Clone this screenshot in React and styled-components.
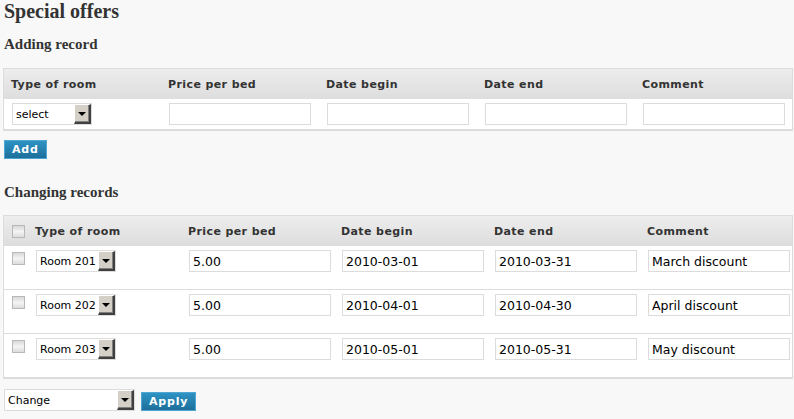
import styled, { createGlobalStyle } from "styled-components";

const GlobalStyle = createGlobalStyle`
  body {
    margin: 0;
    background: #f8f8f8;
    font-family: "DejaVu Sans", Verdana, sans-serif;
    color: #000;
  }
`;

const Page = styled.div`
  padding: 0 1px 8px 3px;
  width: 790px;
`;

const Title = styled.h1`
  font-family: "Liberation Serif", "Times New Roman", serif;
  font-size: 20px;
  font-weight: bold;
  color: #333;
  margin: 0 0 0 1px;
  line-height: 22px;
`;

const Section = styled.h2`
  font-family: "Liberation Serif", "Times New Roman", serif;
  font-size: 15px;
  font-weight: bold;
  color: #333;
  margin: ${(p) => p.$top}px 0 0 1px;
  line-height: 18px;
`;

const Table = styled.div`
  margin-top: ${(p) => p.$top}px;
  border: 1px solid #dcdcdc;
  border-bottom-width: 2px;
  background: #fff;
`;

const Row = styled.div`
  display: grid;
  grid-template-columns: ${(p) => p.$cols};
  align-items: ${(p) => (p.$head ? "center" : "start")};
  height: ${(p) => p.$h}px;
  box-sizing: border-box;
  background: ${(p) =>
    p.$head ? "linear-gradient(#ededed, #dddddd)" : "#fff"};
  border-top: ${(p) => (p.$divider ? "1px solid #dcdcdc" : "none")};
  padding-top: ${(p) => p.$pt || 0}px;
`;

const Cell = styled.div`
  padding-left: ${(p) => p.$pl ?? 7}px;
  padding-top: ${(p) => p.$ptop || 0}px;
  display: flex;
  align-items: center;
`;

const Head = styled.span`
  font-size: 11px;
  font-weight: bold;
  color: #333;
  letter-spacing: 0.4px;
  white-space: nowrap;
`;

const Input = styled.input`
  box-sizing: border-box;
  width: 142px;
  height: 22px;
  border: 1px solid #dcdcdc;
  background: #fff;
  font-family: "DejaVu Sans", Verdana, sans-serif;
  font-size: 12.5px;
  padding: 0 0 0 3px;
  margin: 0 0 0 1px;
  color: #000;
  outline: none;
`;

const SelectBox = styled.div`
  box-sizing: border-box;
  width: ${(p) => p.$w}px;
  height: 22px;
  border: 1px solid #dcdcdc;
  background: #fff;
  display: flex;
  align-items: center;
  justify-content: space-between;
  padding: 0 0 0 3px;
  font-size: 11px;
  color: #000;
  margin-left: 1px;
  white-space: nowrap;
`;

const Arrow = styled.span`
  box-sizing: border-box;
  flex: none;
  width: 17px;
  height: 20px;
  background: #d4d0c8;
  border-top: 1px solid #fff;
  border-left: 1px solid #fff;
  border-right: 2px solid #404040;
  border-bottom: 2px solid #404040;
  box-shadow: inset -1px -1px 0 #808080;
  display: flex;
  align-items: center;
  justify-content: center;
  &::after {
    content: "";
    border-left: 4px solid transparent;
    border-right: 4px solid transparent;
    border-top: 4px solid #000;
  }
`;

const Check = styled.span`
  display: block;
  box-sizing: border-box;
  width: 13px;
  height: 13px;
  border: 1px solid #b8b8b8;
  background: linear-gradient(#d8d8d8, #f4f4f4 50%, #dcdcdc);
`;

const Button = styled.button`
  height: 19px;
  padding: 0 ${(p) => p.$px}px;
  border: 1px solid #4fa7d1;
  background: linear-gradient(#2e93c4, #1d6f9b);
  color: #fff;
  font-family: "DejaVu Sans", Verdana, sans-serif;
  font-size: 11px;
  font-weight: bold;
  letter-spacing: 0.8px;
  line-height: 16px;
  cursor: pointer;
`;

const Footer = styled.div`
  display: flex;
  align-items: flex-start;
  gap: 6px;
  margin-top: 10px;
`;

const AddWrap = styled.div`
  margin-top: 9px;
  margin-left: 1px;
  display: flex;
`;

const Select = ({ value, w }) => (
  <SelectBox $w={w}>
    <span>{value}</span>
    <Arrow />
  </SelectBox>
);

const addCols = "157px 158px 158px 158px 1fr";
const editCols = "24px 153px 153px 153px 153px 1fr";

const records = [
  { room: "Room 201", price: "5.00", begin: "2010-03-01", end: "2010-03-31", comment: "March discount" },
  { room: "Room 202", price: "5.00", begin: "2010-04-01", end: "2010-04-30", comment: "April discount" },
  { room: "Room 203", price: "5.00", begin: "2010-05-01", end: "2010-05-31", comment: "May discount" },
];

const headers = ["Type of room", "Price per bed", "Date begin", "Date end", "Comment"];

const App = () => {
  return (
    <Page>
      <GlobalStyle />
      <Title>Special offers</Title>
      <Section $top={13}>Adding record</Section>

      <Table $top={15}>
        <Row $head $cols={addCols} $h={30}>
          {headers.map((h) => (
            <Cell key={h}>
              <Head>{h}</Head>
            </Cell>
          ))}
        </Row>
        <Row $cols={addCols} $h={30} $pt={4}>
          <Cell>
            <Select value="select" w={80} />
          </Cell>
          <Cell><Input /></Cell>
          <Cell><Input /></Cell>
          <Cell><Input /></Cell>
          <Cell><Input /></Cell>
        </Row>
      </Table>

      <AddWrap>
        <Button $px={7}>Add</Button>
      </AddWrap>

      <Section $top={24}>Changing records</Section>

      <Table $top={14}>
        <Row $head $cols={editCols} $h={30}>
          <Cell $pl={8}><Check /></Cell>
          {headers.map((h) => (
            <Cell key={h}>
              <Head>{h}</Head>
            </Cell>
          ))}
        </Row>
        {records.map((r, i) => (
          <Row key={r.room} $cols={editCols} $h={i === 0 ? 43 : 44} $divider={i > 0} $pt={4}>
            <Cell $pl={8} $ptop={2}><Check /></Cell>
            <Cell><Select value={r.room} w={80} /></Cell>
            <Cell><Input defaultValue={r.price} /></Cell>
            <Cell><Input defaultValue={r.begin} /></Cell>
            <Cell><Input defaultValue={r.end} /></Cell>
            <Cell><Input defaultValue={r.comment} /></Cell>
          </Row>
        ))}
      </Table>

      <Footer>
        <Select value="Change" w={131} />
        <Button $px={7} style={{ marginTop: 3 }}>Apply</Button>
      </Footer>
    </Page>
  );
};

export default App;
